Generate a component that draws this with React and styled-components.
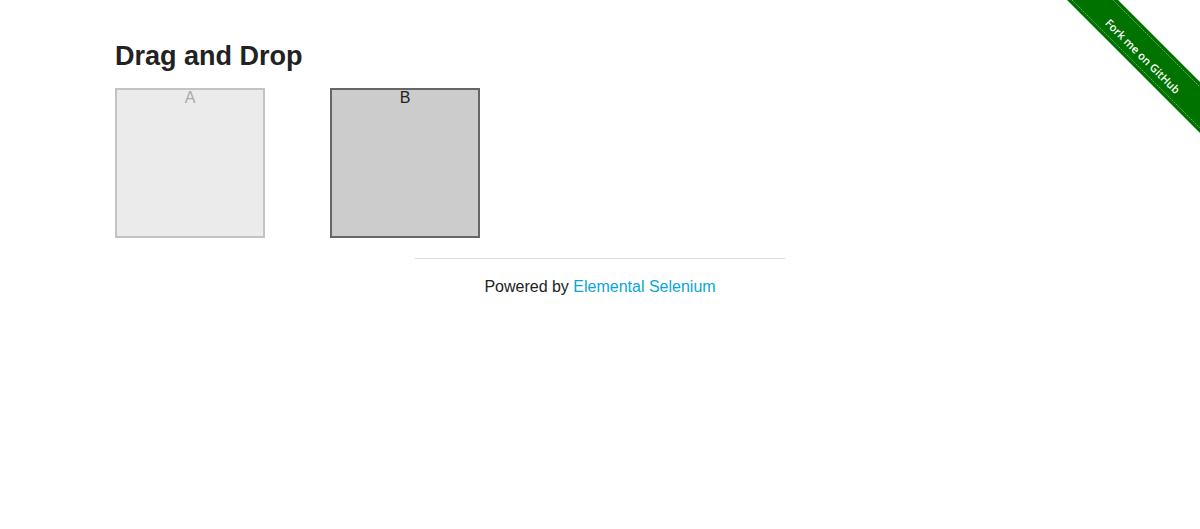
import styled, { createGlobalStyle } from "styled-components";

const GlobalStyle = createGlobalStyle`
  html, body {
    margin: 0;
    padding: 0;
    background: #fff;
  }
  body {
    font-family: "Liberation Sans", Arial, Helvetica, sans-serif;
    font-size: 16px;
    color: #222;
  }
`;

const Page = styled.div`
  position: relative;
  min-height: 529px;
  overflow: hidden;
`;

const Container = styled.div`
  width: 970px;
  margin: 0 auto;
  padding-top: 40px;
`;

const Title = styled.h3`
  margin: 0 0 16px;
  font-size: 27px;
  line-height: 32px;
  font-weight: 700;
  color: #222;
`;

const Columns = styled.div`
  display: flex;
  gap: 65px;
`;

const Column = styled.div`
  box-sizing: border-box;
  width: 150px;
  height: 150px;
  border: 2px solid ${(p) => (p.$dim ? "#c3c3c3" : "#666")};
  background: ${(p) => (p.$dim ? "#ebebeb" : "#ccc")};
  text-align: center;
  cursor: move;

  header {
    font-size: 16px;
    line-height: 16px;
    color: ${(p) => (p.$dim ? "#aaa" : "#222")};
  }
`;

const Footer = styled.div`
  width: 370px;
  margin: 20px auto 0;
  border-top: 1px solid #ddd;
  padding-top: 18px;
  text-align: center;
  font-size: 16px;
  line-height: 20px;
  color: #222;

  a {
    color: #0aa6d6;
    text-decoration: none;
  }
`;

const Ribbon = styled.a`
  position: absolute;
  top: 0;
  right: 0;
  width: 149px;
  height: 149px;
  display: block;
`;

const ForkRibbon = () => (
  <Ribbon href="#">
    <svg width="149" height="149" viewBox="0 0 149 149">
      <polygon points="16,0 67,0 149,82 149,133" fill="#007200" />
      <line x1="21" y1="0" x2="149" y2="128" stroke="#5fae5f" strokeWidth="1" strokeDasharray="2 1" />
      <line x1="62" y1="0" x2="149" y2="87" stroke="#5fae5f" strokeWidth="1" strokeDasharray="2 1" />
      <text
        x="0"
        y="0"
        transform="translate(92 56) rotate(45)"
        textAnchor="middle"
        dominantBaseline="central"
        fill="#fff"
        fontFamily="'Open Sans', 'Liberation Sans', sans-serif"
        fontWeight="600"
        fontSize="11"
      >
        Fork me on GitHub
      </text>
    </svg>
  </Ribbon>
);

export default function App() {
  return (
    <Page>
      <GlobalStyle />
      <ForkRibbon />
      <Container>
        <Title>Drag and Drop</Title>
        <Columns>
          <Column $dim>
            <header>A</header>
          </Column>
          <Column>
            <header>B</header>
          </Column>
        </Columns>
      </Container>
      <Footer>
        Powered by <a href="#">Elemental Selenium</a>
      </Footer>
    </Page>
  );
}
